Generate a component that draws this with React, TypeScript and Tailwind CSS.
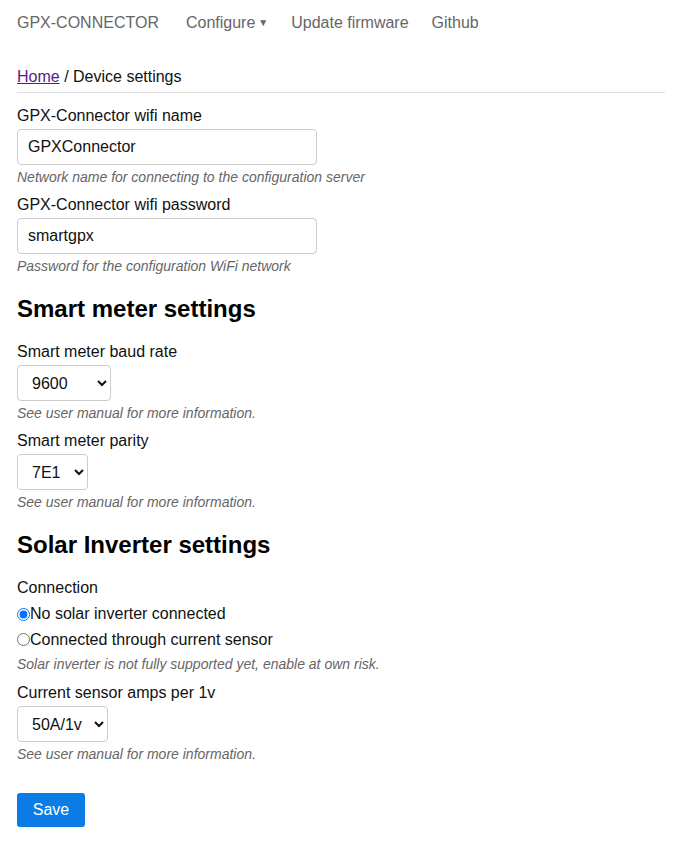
import { useState } from 'react'

const navItems = ['Configure', 'Update firmware', 'Github']

function Help({ children }: { children: React.ReactNode }) {
  return <div className="mt-[1px] text-[14px] italic leading-[22px] text-[#666]">{children}</div>
}

function Label({ children }: { children: React.ReactNode }) {
  return <div className="leading-[26px] text-[16px] text-[#111]">{children}</div>
}

function Select({ value, options, width }: { value: string; options: string[]; width: string }) {
  return (
    <select
      defaultValue={value}
      className={`${width} h-[36px] rounded-[4px] border border-[#ccc] bg-white pl-[10px] pr-[4px] text-[16px] text-[#111]`}
    >
      {options.map((o) => (
        <option key={o}>{o}</option>
      ))}
    </select>
  )
}

export default function App() {
  const [conn, setConn] = useState('none')

  return (
    <div className="min-h-screen bg-white pl-[17px] pr-[10px] font-['Liberation_Sans',Arial,sans-serif] text-[#111]">
      {/* Top nav */}
      <nav className="flex h-[45px] items-center text-[16px] text-[#666]">
        <span className="mr-[27px]">GPX-CONNECTOR</span>
        {navItems.map((item, i) => (
          <span key={item} className="mr-[23px] flex items-center">
            {item}
            {i === 0 && <span className="ml-[3px] text-[10px]">▼</span>}
          </span>
        ))}
      </nav>

      {/* Breadcrumb */}
      <div className="mt-[19px] border-b border-[#e0e0e0] pb-[2px] leading-[26px]">
        <a href="#" className="text-[#551a8b] underline">Home</a>
        <span> / Device settings</span>
      </div>

      <form className="pt-[10px]" onSubmit={(e) => e.preventDefault()}>
        <Label>GPX-Connector wifi name</Label>
        <input
          defaultValue="GPXConnector"
          className="h-[36px] w-[300px] rounded-[4px] border border-[#ccc] px-[10px] text-[16px] text-[#111]"
        />
        <Help>Network name for connecting to the configuration server</Help>

        <div className="mt-[4px]">
          <Label>GPX-Connector wifi password</Label>
        </div>
        <input
          defaultValue="smartgpx"
          className="h-[36px] w-[300px] rounded-[4px] border border-[#ccc] px-[10px] text-[16px] text-[#111]"
        />
        <Help>Password for the configuration WiFi network</Help>

        <h2 className="mt-[17px] mb-[15px] text-[24px] font-bold leading-[30px] text-black">Smart meter settings</h2>

        <Label>Smart meter baud rate</Label>
        <Select value="9600" options={['9600', '115200']} width="w-[94px]" />
        <Help>See user manual for more information.</Help>

        <div className="mt-[4px]">
          <Label>Smart meter parity</Label>
        </div>
        <Select value="7E1" options={['7E1', '8N1']} width="w-[71px]" />
        <Help>See user manual for more information.</Help>

        <h2 className="mt-[17px] mb-[15px] text-[24px] font-bold leading-[30px] text-black">Solar Inverter settings</h2>

        <Label>Connection</Label>
        <label className="flex items-center leading-[26px]">
          <input
            type="radio"
            name="conn"
            checked={conn === 'none'}
            onChange={() => setConn('none')}
            className="m-0 h-[13px] w-[13px]"
          />
          No solar inverter connected
        </label>
        <label className="flex items-center leading-[25px]">
          <input
            type="radio"
            name="conn"
            checked={conn === 'sensor'}
            onChange={() => setConn('sensor')}
            className="m-0 h-[13px] w-[13px]"
          />
          Connected through current sensor
        </label>
        <Help>Solar inverter is not fully supported yet, enable at own risk.</Help>

        <div className="mt-[5px]">
          <Label>Current sensor amps per 1v</Label>
        </div>
        <Select value="50A/1v" options={['50A/1v', '30A/1v', '100A/1v']} width="w-[91px]" />
        <Help>See user manual for more information.</Help>

        <button
          type="submit"
          className="mt-[28px] h-[34px] w-[68px] rounded-[3px] bg-[#0b7be6] text-[16px] text-white"
        >
          Save
        </button>
      </form>
    </div>
  )
}
